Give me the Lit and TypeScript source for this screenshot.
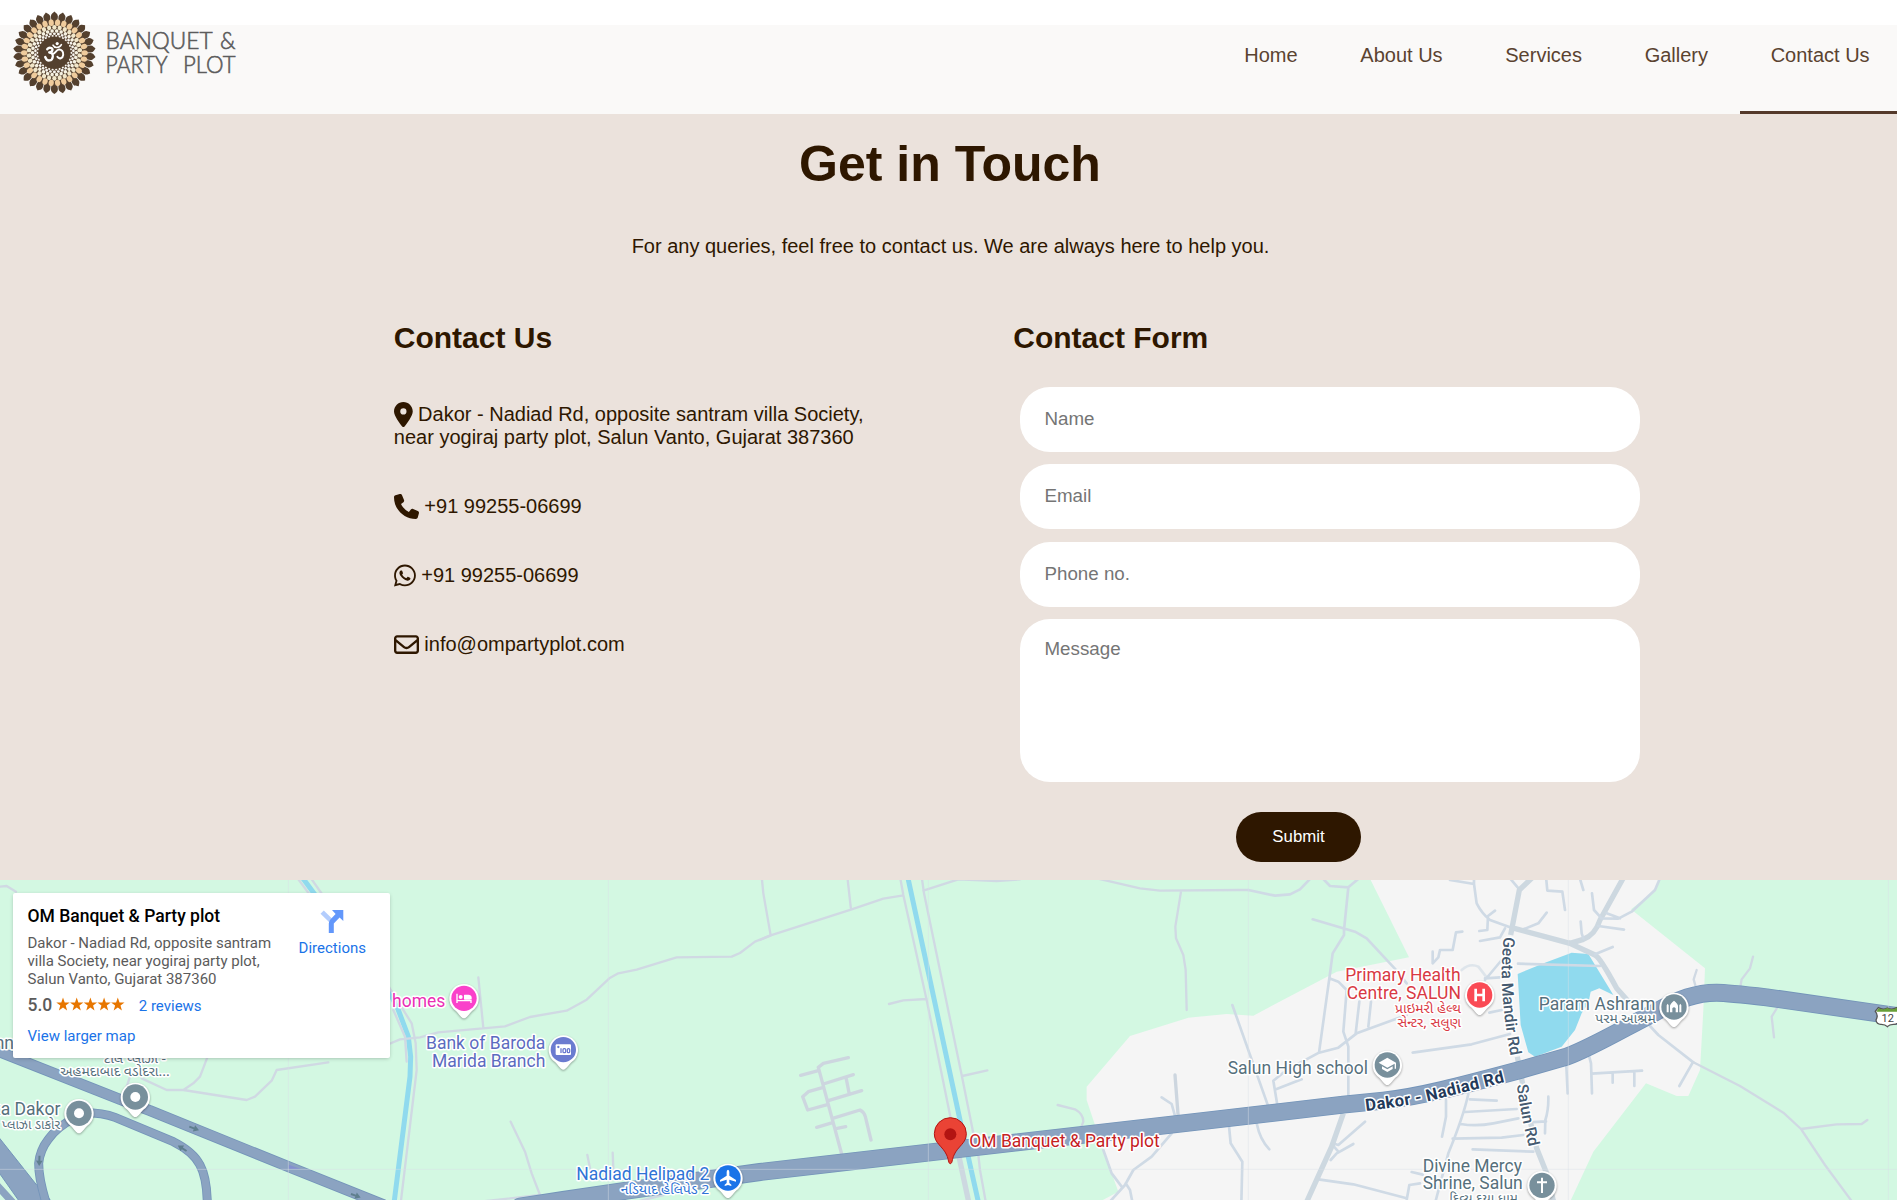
import { LitElement, html, svg, css } from "lit";
import { customElement } from "lit/decorators.js";

const LOCATION =
  "M215.7 499.2C267 435 384 279.4 384 192C384 86 298 0 192 0S0 86 0 192c0 87.4 117 243 168.3 307.2c12.3 15.3 35.1 15.3 47.4 0zM192 128a64 64 0 1 1 0 128 64 64 0 1 1 0-128z";
const PHONE =
  "M164.9 24.6c-7.7-18.6-28-28.5-47.4-23.2l-88 24C12.1 30.2 0 46 0 64C0 311.4 200.6 512 448 512c18 0 33.8-12.1 38.6-29.5l24-88c5.3-19.4-4.6-39.7-23.2-47.4l-96-40c-16.3-6.8-35.2-2.1-46.3 11.6L304.7 368C234.3 334.7 177.3 277.7 144 207.3L193.3 167c13.7-11.2 18.4-30 11.6-46.3l-40-96z";
const WHATSAPP =
  "M380.9 97.1C339 55.1 283.2 32 223.9 32c-122.4 0-222 99.6-222 222 0 39.1 10.2 77.3 29.6 111L0 480l117.7-30.9c32.4 17.7 68.9 27 106.1 27h.1c122.3 0 224.1-99.6 224.1-222 0-59.3-25.2-115-67.1-157zm-157 341.6c-33.2 0-65.7-8.9-94-25.7l-6.7-4-69.8 18.3L72 359.2l-4.4-7c-18.5-29.4-28.2-63.3-28.2-98.2 0-101.7 82.8-184.5 184.6-184.5 49.3 0 95.6 19.2 130.4 54.1 34.8 34.9 56.2 81.2 56.1 130.5 0 101.8-84.9 184.6-186.6 184.6zm101.2-138.2c-5.5-2.8-32.8-16.2-37.9-18-5.1-1.9-8.8-2.8-12.5 2.8-3.7 5.6-14.3 18-17.6 21.8-3.2 3.7-6.5 4.2-12 1.4-32.6-16.3-54-29.1-75.5-66-5.7-9.8 5.7-9.1 16.3-30.3 1.8-3.7.9-6.9-.5-9.7-1.4-2.8-12.5-30.1-17.1-41.2-4.5-10.8-9.1-9.3-12.5-9.5-3.2-.2-6.9-.2-10.6-.2-3.7 0-9.7 1.4-14.8 6.9-5.1 5.6-19.4 19-19.4 46.3 0 27.3 19.9 53.7 22.6 57.4 2.8 3.7 39.1 59.7 94.8 83.8 35.2 15.2 49 16.5 66.6 13.9 10.7-1.6 32.8-13.4 37.4-26.4 4.6-13 4.6-24.1 3.2-26.4-1.3-2.5-5-3.9-10.5-6.6z";
const ENVELOPE =
  "M64 112c-8.8 0-16 7.2-16 16l0 22.1L220.5 291.7c20.7 17 50.4 17 71.1 0L464 150.1l0-22.1c0-8.8-7.2-16-16-16L64 112zM48 212.2L48 384c0 8.8 7.2 16 16 16l384 0c8.8 0 16-7.2 16-16l0-171.8L322 328.8c-38.4 31.5-93.7 31.5-132 0L48 212.2zM0 128C0 92.7 28.7 64 64 64l384 0c35.3 0 64 28.7 64 64l0 256c0 35.3-28.7 64-64 64L64 448c-35.3 0-64-28.7-64-64L0 128z";

/* ------------------------------------------------------------------ logo */

const ring = (count: number, radius: number, rx: number, ry: number, fill: string, shift = 0) =>
  Array.from({ length: count }, (_, i) => {
    const angle = ((i + shift) * 360) / count;
    return svg`<ellipse cx="0" cy=${-radius} rx=${rx} ry=${ry} fill=${fill} transform="rotate(${angle})"></ellipse>`;
  });

const tips = (count: number) =>
  Array.from(
    { length: count },
    (_, i) =>
      svg`<path d="M0 -41.3 C1.2 -40 3.6 -39 3.5 -36.4 C3.4 -34.4 3 -33 2.4 -31.5 H-2.4 C-3 -33 -3.4 -34.4 -3.5 -36.4 C-3.6 -39 -1.2 -40 0 -41.3Z" fill="#54402e" transform="rotate(${(i * 360) / count})"></path>`
  );

@customElement("brand-logo")
export class BrandLogo extends LitElement {
  static styles = css`
    :host {
      display: block;
      width: 250px;
      height: 100px;
    }
    .logo {
      display: block;
    }
    .name {
      font-family: Lato, "Liberation Sans", sans-serif;
      font-size: 24px;
      font-weight: 300;
      fill: #5c5c5c;
      stroke: #5c5c5c;
      stroke-width: 0.6px;
    }
    .om {
      fill: none;
      stroke: #fff;
      stroke-linecap: round;
      stroke-linejoin: round;
    }
  `;

  render() {
    return html`
      <svg class="logo" width="250" height="100" viewBox="0 0 250 100">
        <g transform="translate(54.4 52.8)">
          ${tips(30)}
          <circle r="32.6" fill="#5b4633"></circle>
          ${ring(30, 30.2, 2.6, 3.2, "#efcb9c", 0.5)}
          ${ring(30, 25.5, 2.1, 2.4, "#f0e6c9")}
          ${ring(30, 21.9, 1.75, 1.8, "#f6f2e2", 0.5)}
          ${ring(30, 19.1, 1.45, 1.3, "#f8f6f1")}
          ${ring(30, 17, 1.1, 0.9, "#f8f6f1", 0.5)}
          <circle r="15.6" fill="#54402e"></circle>
          <g class="om">
            <path stroke-width="2.3" d="M-7.2 -3.6 C-5.6 -5.8 -1.8 -5.4 -1.9 -3 C-2 -1.1 -4 -0.4 -5.2 -0.3 C-2.9 -0.4 -1.3 1.4 -1.6 3.8 C-2.1 8.4 -7.4 9.4 -9.2 4.2"></path>
            <path stroke-width="2" d="M-1.9 0.8 C0.4 1.4 1.6 -2.6 4.2 -3.2 C7.2 -3.6 9.2 -1 8.8 2 C8.4 5.6 4.8 6.8 3 4"></path>
            <path stroke-width="1.6" d="M-1.4 -7.6 C0 -4.6 4.8 -4.4 7 -8.2"></path>
          </g>
          <circle cx="2.8" cy="-9.2" r="1.6" fill="#fff"></circle>
        </g>
        <text class="name" x="105.6" y="49.4" textLength="107" lengthAdjust="spacingAndGlyphs">BANQUET</text>
        <text class="name" x="220" y="49.4" textLength="15.5" lengthAdjust="spacingAndGlyphs">&amp;</text>
        <text class="name" x="105.6" y="73" textLength="62" lengthAdjust="spacingAndGlyphs">PARTY</text>
        <text class="name" x="183" y="73" textLength="52.5" lengthAdjust="spacingAndGlyphs">PLOT</text>
      </svg>
    `;
  }
}

/* ------------------------------------------------------------------- map */

const pin = (x: number, y: number, color: string, glyph: unknown) => svg`
  <g transform="translate(${x} ${y})">
    <path class="drop" d="M0 60 C-9 60 -14 47 -24 38 A44 44 0 1 1 24 38 C14 47 9 60 0 60Z"></path>
    <circle r="38" fill=${color}></circle>
    ${glyph}
  </g>`;

const arrow = (x: number, y: number, angle: number) =>
  svg`<path d="M-15 -3 H0 V-10 L16 0 0 10 V3 H-15Z" fill="#5f7f8e" transform="translate(${x} ${y}) rotate(${angle})"></path>`;

const dot = svg`<circle r="15" fill="#fff"></circle>`;
const slate = "#78909c";
const highway =
  "M1560 1010 L1690 990 1880 962 2280 906 3600 754 4030 704 4150 692 C4260 680 4380 648 4560 600 L4700 560 C4780 530 4880 470 4960 430 C5040 385 5090 368 5150 368 Q5180 368 5300 382 L5691 438";
const tollRoad = "M-20 538 L360 688 450 722 865 890 1150 1004";
const loopRight = "M250 728 Q310 728 345 742 L520 815 Q580 845 600 885 Q622 925 622 1010";
const loopLeft = "M230 740 Q170 770 145 808 Q120 840 116 880 Q116 930 142 1010";

@customElement("location-map")
export class LocationMap extends LitElement {
  static styles = css`
    :host {
      display: block;
      position: relative;
      height: 320px;
      overflow: hidden;
      font-family: Roboto, "Noto Sans", sans-serif;
    }
    .canvas {
      display: block;
      width: 1897px;
      height: 320px;
      background: #d3f8e2;
    }
    .lane,
    .street,
    .avenue,
    .block,
    .water,
    .edge,
    .core {
      fill: none;
      stroke-linejoin: round;
      stroke-linecap: round;
    }
    .lane {
      stroke: #d0d9e3;
      stroke-width: 7px;
    }
    .street {
      stroke: #cfdae5;
      stroke-width: 8px;
    }
    .avenue {
      stroke: #cdd8e0;
      stroke-width: 16px;
      stroke-linecap: butt;
    }
    .block {
      stroke: #cdd6df;
      stroke-width: 10px;
    }
    .water {
      stroke: #90daee;
      stroke-width: 15px;
    }
    .edge {
      stroke: #7394b9;
    }
    .core {
      stroke: #8ba3c1;
    }
    .wide.edge {
      stroke-width: 54px;
    }
    .wide.core {
      stroke-width: 49px;
    }
    .slim.edge {
      stroke-width: 33px;
    }
    .slim.core {
      stroke-width: 28px;
    }
    .loop.edge {
      stroke-width: 27px;
    }
    .loop.core {
      stroke-width: 22px;
    }
    .seam {
      stroke: #d9dde6;
      stroke-opacity: 0.45;
      stroke-width: 3px;
    }
    .drop {
      fill: #fff;
      filter: drop-shadow(0 3px 3px rgba(0, 0, 0, 0.35));
    }
    .label {
      font-size: 52.5px;
      paint-order: stroke;
      stroke: #fff;
      stroke-width: 9px;
      stroke-linejoin: round;
    }
    .native {
      font-family: "Noto Sans Gujarati", "Noto Sans", sans-serif;
      font-size: 39px;
    }
    .end {
      text-anchor: end;
    }
    .slate {
      fill: #56707c;
    }
    .pink {
      fill: #ea2fb5;
    }
    .indigo {
      fill: #5c6bc0;
    }
    .blue {
      fill: #2f74d6;
    }
    .red {
      fill: #d93a44;
    }
    .crimson {
      fill: #c5221f;
    }
    .road {
      fill: #455a70;
      font-size: 48px;
      font-weight: 500;
    }
    .main {
      fill: #243a5a;
      font-size: 50px;
      font-weight: 700;
    }
    .shield {
      fill: #444;
      font-size: 33px;
      text-anchor: middle;
    }
    .card {
      position: absolute;
      left: 13px;
      top: 13px;
      box-sizing: border-box;
      width: 377px;
      height: 165px;
      padding: 11.5px 24px 0 14.5px;
      display: flex;
      justify-content: space-between;
      background: #fff;
      border-radius: 2px;
      box-shadow: 0 1px 4px -1px rgba(0, 0, 0, 0.3);
      font-size: 15px;
      line-height: 18px;
      color: #5b5b5b;
    }
    .place {
      display: flex;
      flex-direction: column;
      width: 250px;
    }
    .title {
      font-size: 17.5px;
      line-height: 22px;
      font-weight: 500;
      color: #000;
    }
    .address {
      margin-top: 7.5px;
      white-space: nowrap;
    }
    .rating {
      display: flex;
      align-items: baseline;
      margin-top: 6px;
      line-height: 22px;
    }
    .score {
      font-size: 17.5px;
      font-weight: 500;
    }
    .stars {
      width: 70px;
      height: 14px;
      margin-left: 4px;
    }
    .link {
      color: #1a73e8;
    }
    .reviews {
      margin-left: 12.5px;
    }
    .larger {
      margin-top: 10px;
    }
    .directions {
      display: flex;
      flex-direction: column;
      align-items: center;
      gap: 6px;
      padding-top: 5px;
    }
  `;

  private land() {
    return svg`
      <path fill="#f5f5f5" d="M3260 650 L3390 498 3565 443 3680 432 3760 437 4010 305 4227 262 4107 20 H4985 L4965 62 4893 118 5115 295 5110 420 5100 600 5065 678 5030 678 4938 640 4780 845 4708 1000 H3290 L3355 965 3310 840 3285 765 3260 690Z"></path>
      <path fill="#90daee" d="M4553 312 L4635 278 4715 248 4765 252 4840 375 4798 355 4772 365 4765 400 4745 430 4725 480 4685 530 4605 560 4585 547 4562 465Z"></path>
      <path class="lane" d="M0 50 L20 48 48 65 M425 625 L500 660 H550 L740 690 765 680 815 632 830 600 985 577 M622 562 L600 620 580 640 550 660 M390 620 L380 650 M895 28 L930 75 M935 28 L968 75"></path>
      <path class="water" d="M905 20 L948 78"></path>
      <g transform="translate(1140 0)">
        <path class="water" d="M20 350 L55 420 85 500 92 560 90 620 42 1000"></path>
        <path class="lane" d="M20 525 L60 508 120 502 175 487 375 469 450 441 560 422 620 389 688 325 715 310 770 299 890 262 1055 260 1080 249 1125 215 1172 196 M295 322 L310 474 M392 755 L435 845 455 910 480 975 300 995 M622 855 L630 895 M698 848 L700 895 M20 340 L95 460 107 520 110 600 62 1000 M40 420 L75 500 80 575 M750 1000 L850 975"></path>
      </g>
      <g transform="translate(2280 0)">
        <path class="lane" d="M420 20 L430 75 500 390 572 745 M485 20 L492 70 605 615 640 790 M0 210 L32 196 275 118 370 86 430 76 M5 20 L10 70 32 196 M262 20 L273 118 M490 62 L595 28 L710 33 780 28 M1010 25 L1140 55 1200 62 1440 60 1465 60 M1263 65 L1246 170 1248 205 1270 255 1277 300 1280 420 M387 402 L430 391 500 387 M607 618 L682 601 M893 705 L945 718 Q970 732 970 755 L962 775 M655 855 L660 900 678 1000"></path>
        <path class="water" d="M443 20 L510 330 600 750 656 1000"></path>
        <path class="avenue" d="M597 860 L627 1000"></path>
        <path class="street" d="M1205 682 L1235 702 1247 745 M1235 790 L1175 860 1120 900 1095 945 1045 1000 M1030 840 L1055 910 1085 950 M1097 940 L1110 960 1118 1000"></path>
        <path class="block" d="M1245 615 L1255 745 M175 592 L190 580 265 563 M122 616 L175 602 M175 592 L245 852 M190 642 L280 614 M258 622 L267 668 M190 652 L145 665 128 680 143 720 205 703 M205 692 L305 662 M218 745 L300 720 Q312 726 316 740 L333 810 M170 772 L218 758 M228 776 L257 770"></path>
      </g>
      <g transform="translate(3600 0)">
        <path class="street" d="M145 60 L225 77 270 73 300 58 332 25 M368 25 L390 48 445 52 477 25 M445 52 L432 180 432 195 398 250 388 325 357 548 M338 148 L465 185 500 205 590 302 620 340 M388 325 L415 335 440 360 430 485 445 530 445 680 M97 405 L205 710 M232 705 L220 632 260 600 357 548 415 533 470 490 620 435 M228 658 L305 628 M478 395 L467 490 M513 395 L505 470 M638 548 L815 523 930 492 M750 30 L822 42 830 100 Q845 130 870 150 L930 172 M822 20 V42 M885 122 L864 138 862 180 838 183 M840 213 L900 202 915 175 M787 185 L768 187 758 240 H720 L715 262 698 280 V245 M855 330 L905 270 M855 325 L900 322 M868 428 L905 420 M970 178 L1015 160 1040 128 M930 25 L958 58 M1038 20 L1042 62 1087 65 1095 120"></path>
        <path class="street" stroke-opacity=".6" d="M785 300 Q810 278 835 290 L860 322"></path>
        <path class="street" d="M87 768 L92 820 127 875 124 1000 M170 760 Q180 810 208 838 M495 755 L415 825 398 820 M460 822 L410 850 392 870 M398 825 L415 845 M355 928 L460 943 620 985 M738 690 V740 L726 800 M805 672 Q790 740 745 850 L705 1000 M810 688 L890 692 M795 726 L950 717 M782 762 Q830 770 880 760 L955 745 M758 806 L905 803 970 795 M818 838 L1000 845 M1045 680 Q1046 720 1036 750 L1035 790 M985 757 L1038 754 M635 906 L668 914 M620 990 L628 945 660 940"></path>
        <path class="avenue" d="M1000 20 L958 60 932 195 M935 173 L1110 220 M430 730 L395 830 318 1000 M952 560 L985 730 1010 835 1040 910 1062 1000"></path>
      </g>
      <g transform="translate(4560 0)">
        <path class="avenue" d="M312 20 L240 150 Q225 195 190 208 L150 220 M145 218 L225 255 Q240 262 290 355 L330 400"></path>
        <path class="street" d="M178 20 L190 60 M216 70 L222 120 245 145 295 146 335 125 405 60 422 20 M235 168 L312 179 M182 155 L185 190 190 205 M225 253 L278 231 M260 130 L300 145 M-6 281 L240 288 M139 588 L143 670 M207 557 L213 580 216 670 M215 611 L366 602 M278 608 V638 M343 605 V648 M518 578 L478 648 M390 468 L415 495 520 577"></path>
        <path class="lane" d="M530 300 L521 328 526 346 M699 260 L690 295 665 328 661 350 M771 414 L755 440 762 502 M520 577 L660 648 790 728 843 777 915 885 1000 1000 M843 777 L950 763 1025 762 1042 750"></path>
      </g>`;
  }

  private highways() {
    return svg`
      <path fill="#8ba3c1" stroke="#7394b9" stroke-width="3" d="M-5 800 L110 945 Q135 965 158 1000 H62 L-5 905Z"></path>
      <path class="core loop" d="M-10 945 L45 1005"></path>
      <path class="edge loop" d=${loopLeft}></path>
      <path class="edge loop" d=${loopRight}></path>
      <path class="core loop" d=${loopLeft}></path>
      <path class="core loop" d=${loopRight}></path>
      <path class="edge slim" d=${tollRoad}></path>
      <path class="core slim" d=${tollRoad}></path>
      <path fill="#8490cf" d="M866 884 L902 897 866 897Z"></path>
      <path class="edge wide" d=${highway}></path>
      <path class="core wide" d=${highway}></path>
      ${arrow(582, 775, 20)} ${arrow(547, 835, 212)} ${arrow(118, 872, 92)} ${arrow(1067, 977, 20)}
      <path class="seam" d="M865 30 V990 M1825 30 V990 M2785 30 V990 M3745 30 V990 M4705 30 V990 M5665 30 V990 M0 898 H5691"></path>`;
  }

  private places() {
    return svg`
      <text class="label slate" x="-16" y="536">nn</text>
      <text class="label native slate" x="312" y="578" textLength="186" lengthAdjust="spacingAndGlyphs">ટોલ પ્લાઝા -</text>
      <text class="label native slate" x="181" y="618" textLength="328" lengthAdjust="spacingAndGlyphs">અહમદાબાદ વડોદરા...</text>
      <text class="label end slate" x="181" y="735">Plaza Dakor</text>
      <text class="label native end slate" x="181" y="778">પ્લાઝા ડાકોર</text>
      ${pin(406, 681, slate, dot)} ${pin(237, 730, slate, dot)}

      <text class="label pink" x="1176" y="411" textLength="160">homes</text>
      ${pin(1392, 385, "#fa41ca", svg`<path fill="#fff" d="M-23 -14 H-19 V5 H19 V-4 Q19 -10 13 -10 H0 V3 H-19 H23 V14 H19 V9 H-19 V14 H-23Z M23 14 V-3 Q22 -11 13 -11 H1 V4 H23Z"></path><circle cx="-10" cy="-4" r="6" fill="#fff"></circle>`)}
      <text class="label indigo" x="1278" y="538" textLength="358">Bank of Baroda</text>
      <text class="label indigo" x="1296" y="591" textLength="340">Marida Branch</text>
      ${pin(1690, 539, "#6b7bd0", svg`<rect x="-23" y="-16" width="46" height="32" rx="3" fill="#fff"></rect><circle cx="-15" cy="-8" r="3.5" fill="#6b7bd0"></circle><path d="M-7 -4 V10" stroke="#6b7bd0" stroke-width="4"></path><rect x="-1" y="-3" width="8" height="12" rx="3" fill="#fff" stroke="#6b7bd0" stroke-width="4"></rect><rect x="12" y="-3" width="7" height="12" rx="3" fill="#fff" stroke="#6b7bd0" stroke-width="4"></rect>`)}
      <text class="label blue" x="1729" y="930" textLength="399">Nadiad Helipad 2</text>
      <text class="label native blue" x="1862" y="973" textLength="266" lengthAdjust="spacingAndGlyphs">નડિયાદ હેલિપેડ 2</text>
      ${pin(2184, 924, "#1a73e8", svg`<path fill="#fff" d="M0 -25 Q4 -24 4 -18 V-7 L24 6 V11 L4 5 V15 L10 20 V24 L0 21 -10 24 V20 L-4 15 V5 L-24 11 V6 L-4 -7 V-18 Q-4 -24 0 -25Z"></path>`)}

      <g transform="translate(2280 0)">
        <path fill="#ea4335" stroke="#b31412" stroke-width="3" d="M571 881 C565 881 566 868 560 855 C548 828 523 820 523 791 A48 48 0 0 1 619 791 C619 820 594 828 582 855 C576 868 577 881 571 881Z"></path>
        <circle cx="571" cy="793" r="18" fill="#b31412"></circle>
        <text class="label crimson" x="628" y="831" textLength="571">OM Banquet &amp; Party plot</text>
      </g>

      <g transform="translate(3600 0)">
        <text class="label red" x="436" y="333" textLength="346">Primary Health</text>
        <text class="label red" x="440" y="386" textLength="343">Centre, SALUN</text>
        <text class="label native red" x="585" y="428" textLength="198" lengthAdjust="spacingAndGlyphs">પ્રાઇમરી હેલ્થ</text>
        <text class="label native red" x="592" y="470" textLength="191" lengthAdjust="spacingAndGlyphs">સેન્ટર, સલુણ</text>
        ${pin(839, 375, "#fa4a55", svg`<path fill="none" stroke="#fff" stroke-width="8" d="M-12 -19 V19 M12 -19 V19 M-12 0 H12"></path>`)}
        <text class="label slate" x="83" y="612" textLength="421">Salun High school</text>
        ${pin(562, 585, slate, svg`<path fill="#fff" d="M0 -22 L26 -7 V11 H22 V-4 L0 8 -26 -7Z M-16 4 L0 13 16 4 V12 L0 21 -16 12Z"></path>`)}
        <path id="geeta" fill="none" d="M911 200 Q901 300 908 380 Q915 470 934 572"></path>
        <text class="label road"><textPath href="#geeta" textLength="360">Geeta Mandir Rd</textPath></text>
        <path id="salun" fill="none" d="M950 645 Q962 735 990 845"></path>
        <text class="label road"><textPath href="#salun" textLength="190">Salun Rd</textPath></text>
        <path id="dakor" fill="none" d="M498 723 Q640 706 720 685 T925 634"></path>
        <text class="label main"><textPath href="#dakor" textLength="426">Dakor - Nadiad Rd</textPath></text>
        <text class="label slate" x="668" y="905" textLength="298">Divine Mercy</text>
        <text class="label slate" x="668" y="958" textLength="300">Shrine, Salun</text>
        <text class="label native slate" x="748" y="1000" textLength="206" lengthAdjust="spacingAndGlyphs">દિવ્ય દયા ધામ</text>
        ${pin(1026, 946, slate, svg`<path stroke="#fff" stroke-width="6" d="M0 -23 V23 M-15 -9 H15"></path>`)}
      </g>

      <g transform="translate(4560 0)">
        <text class="label slate" x="56" y="419" textLength="350">Param Ashram</text>
        <text class="label native slate" x="226" y="459" textLength="181" lengthAdjust="spacingAndGlyphs">પરમ આશ્રમ</text>
        ${pin(462, 411, slate, svg`<path fill="#fff" d="M-22 16 V-5 L-19 -10 -16 -5 V16Z M16 16 V-5 L19 -10 22 -5 V16Z M-12 16 V-3 Q-12 -9 0 -19 Q12 -9 12 -3 V16 H5 V4 Q0 -2 -5 4 V16Z"></path>`)}
        <path fill="#fff" stroke="#555" stroke-width="4" d="M1075 413 Q1090 422 1102 414 Q1116 422 1130 413 L1138 424 Q1130 436 1138 450 Q1134 464 1120 463 Q1108 463 1102 470 Q1096 463 1084 463 Q1070 464 1068 450 Q1076 436 1066 424Z"></path>
        <path fill="#689f38" d="M1076 415 Q1090 422 1102 414 Q1116 422 1130 413 L1137 425 H1069Z"></path>
        <text class="shield" x="1103" y="455">12</text>
      </g>`;
  }

  render() {
    return html`
      <svg class="canvas" viewBox="0 30 5691 960" preserveAspectRatio="none">
        ${this.land()} ${this.highways()} ${this.places()}
      </svg>
      <div class="card">
        <div class="place">
          <div class="title">OM Banquet &amp; Party plot</div>
          <div class="address">
            Dakor - Nadiad Rd, opposite santram<br />villa Society, near yogiraj party plot,<br />Salun Vanto,
            Gujarat 387360
          </div>
          <div class="rating">
            <span class="score">5.0</span>
            <svg class="stars" viewBox="0 0 70 14">
              ${[0, 1, 2, 3, 4].map(
                (i) =>
                  svg`<path fill="#e77600" transform="translate(${7 + i * 13.7} 7.6)" d="M0 -7 L1.7 -2.2 6.7 -2.1 2.7 1 4.1 5.8 0 3 -4.1 5.8 -2.7 1 -6.7 -2.1 -1.7 -2.2Z"></path>`
              )}
            </svg>
            <span class="link reviews">2 reviews</span>
          </div>
          <div class="link larger">View larger map</div>
        </div>
        <div class="directions">
          <svg width="24" height="23" viewBox="0 0 24 23">
            <path fill="#b3cdfd" d="M0.5 3.8 L3.8 0.5 12 8.5 9 12Z"></path>
            <path fill="#6297fb" d="M12 0 H23.3 V11 L19.6 7.6 13.8 13.4 V23 H8.8 V13.4 Q8.8 11 10.6 9.2 L15.6 4Z"></path>
          </svg>
          <span class="link">Directions</span>
        </div>
      </div>
    `;
  }
}

/* ------------------------------------------------------------------ page */

const icon = (path: string, width: number) => html`
  <svg class="icon" width=${(width * 25) / 512} height="25" viewBox="0 0 ${width} 512"><path d=${path}></path></svg>
`;

@customElement("app-root")
export class AppRoot extends LitElement {
  static styles = css`
    :host {
      display: block;
      height: 1200px;
      overflow: hidden;
      font-family: Arial, "Liberation Sans", sans-serif;
      font-size: 20px;
      line-height: 23px;
      color: #2e1700;
      background: #fff;
    }
    .header {
      display: flex;
      justify-content: space-between;
      height: 114px;
      background: linear-gradient(#fff 25px, #faf9f8 25px);
    }
    .nav {
      display: flex;
      gap: 4.9px;
      padding-top: 25px;
    }
    .item {
      box-sizing: border-box;
      height: 89px;
      padding: 18.5px 27.4px 0 30.4px;
      color: #5a4330;
      text-decoration: none;
      border-bottom: 3px solid transparent;
    }
    .current {
      border-bottom-color: #54392a;
    }
    .contact {
      box-sizing: border-box;
      height: 766px;
      padding-top: 22px;
      background: #ebe2dc;
    }
    .heading {
      margin: 0;
      padding-left: 3px;
      font-size: 50px;
      line-height: 57px;
      text-align: center;
    }
    .lead {
      margin: 42px 0 0;
      padding-left: 4px;
      text-align: center;
    }
    .columns {
      display: grid;
      grid-template-columns: 619.5px 627px;
      padding: 63px 0 0 393.8px;
    }
    .subheading {
      margin: 0;
      font-size: 30px;
      line-height: 34px;
    }
    .details {
      display: flex;
      flex-direction: column;
      gap: 46px;
      margin-top: 48px;
    }
    .detail {
      white-space: nowrap;
      height: 23px;
    }
    .tall {
      height: 46px;
    }
    .icon {
      margin: -5px 0;
      vertical-align: -0.8px;
      fill: #2e1700;
    }
    .form {
      display: flex;
      flex-direction: column;
      gap: 12.4px;
      margin: 32px 0 0 6.7px;
    }
    .field {
      box-sizing: border-box;
      width: 620px;
      height: 65px;
      padding: 0 24.5px 1px;
      border: 0;
      border-radius: 30px;
      background: #fff;
      font-family: inherit;
      font-size: 18.75px;
      line-height: 22px;
      resize: none;
    }
    .field::placeholder {
      color: #757575;
    }
    .message {
      height: 162.6px;
      padding-top: 19px;
    }
    .submit {
      width: 125px;
      height: 50px;
      margin: 18px 0 0 216px;
      padding: 0;
      border: 0;
      border-radius: 25px;
      background: #2e1700;
      color: #fff;
      font-family: inherit;
      font-size: 16.8px;
    }
  `;

  render() {
    const nav = ["Home", "About Us", "Services", "Gallery", "Contact Us"];
    return html`
      <header class="header">
        <brand-logo></brand-logo>
        <nav class="nav">
          ${nav.map((n) => html`<a class="item ${n === "Contact Us" ? "current" : ""}">${n}</a>`)}
        </nav>
      </header>
      <section class="contact">
        <h1 class="heading">Get in Touch</h1>
        <p class="lead">For any queries, feel free to contact us. We are always here to help you.</p>
        <div class="columns">
          <div>
            <h2 class="subheading">Contact Us</h2>
            <div class="details">
              <div class="detail tall">
                ${icon(LOCATION, 384)} Dakor - Nadiad Rd, opposite santram villa Society,<br />near yogiraj party plot,
                Salun Vanto, Gujarat 387360
              </div>
              <div class="detail">${icon(PHONE, 512)} +91 99255-06699</div>
              <div class="detail">${icon(WHATSAPP, 448)} +91 99255-06699</div>
              <div class="detail">${icon(ENVELOPE, 512)} info@ompartyplot.com</div>
            </div>
          </div>
          <div>
            <h2 class="subheading">Contact Form</h2>
            <div class="form">
              <input class="field" placeholder="Name" />
              <input class="field" placeholder="Email" />
              <input class="field" placeholder="Phone no." />
              <textarea class="field message" placeholder="Message"></textarea>
              <button class="submit">Submit</button>
            </div>
          </div>
        </div>
      </section>
      <location-map></location-map>
    `;
  }
}
